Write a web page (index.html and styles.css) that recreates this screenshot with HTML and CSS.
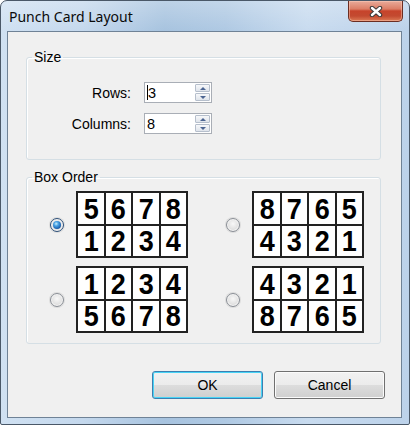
FILE: index.html
```html
<!DOCTYPE html>
<html>
<head>
<meta charset="utf-8">
<link rel="stylesheet" href="styles.css">
</head>
<body>
<div class="window">
  <div class="titlebar">
    <span class="title">Punch Card Layout</span>
    <div class="close">
      <svg width="14" height="11" viewBox="0 0 14 11">
        <path d="M3 2 L11 9 M11 2 L3 9" stroke="#3a3a3a" stroke-width="4.4" stroke-linecap="round" fill="none"/>
        <path d="M3 2 L11 9 M11 2 L3 9" stroke="#ffffff" stroke-width="2.4" stroke-linecap="round" fill="none"/>
      </svg>
    </div>
  </div>
  <div class="client">
    <fieldset class="group">
      <legend>Size</legend>
      <div class="size-body">
        <span class="lbl">Rows:</span>
        <div class="spin">
          <span class="val"><span class="caret"></span>3</span>
          <div class="spin-btns"><span class="sb up"></span><span class="sb down"></span></div>
        </div>
        <span class="lbl">Columns:</span>
        <div class="spin">
          <span class="val">8</span>
          <div class="spin-btns"><span class="sb up"></span><span class="sb down"></span></div>
        </div>
      </div>
    </fieldset>
    <fieldset class="group group-order">
      <legend>Box Order</legend>
      <div class="order-body">
        <div class="option">
          <span class="radio checked"></span>
          <div class="card"><span><b>5</b></span><span><b>6</b></span><span><b>7</b></span><span><b>8</b></span><span><b>1</b></span><span><b>2</b></span><span><b>3</b></span><span><b>4</b></span></div>
        </div>
        <div class="option">
          <span class="radio"></span>
          <div class="card"><span><b>8</b></span><span><b>7</b></span><span><b>6</b></span><span><b>5</b></span><span><b>4</b></span><span><b>3</b></span><span><b>2</b></span><span><b>1</b></span></div>
        </div>
        <div class="option">
          <span class="radio"></span>
          <div class="card"><span><b>1</b></span><span><b>2</b></span><span><b>3</b></span><span><b>4</b></span><span><b>5</b></span><span><b>6</b></span><span><b>7</b></span><span><b>8</b></span></div>
        </div>
        <div class="option">
          <span class="radio"></span>
          <div class="card"><span><b>4</b></span><span><b>3</b></span><span><b>2</b></span><span><b>1</b></span><span><b>8</b></span><span><b>7</b></span><span><b>6</b></span><span><b>5</b></span></div>
        </div>
      </div>
    </fieldset>
    <div class="buttons">
      <button class="btn default">OK</button>
      <button class="btn">Cancel</button>
    </div>
  </div>
</div>
</body>
</html>
```
FILE: styles.css
```css
html, body {
  margin: 0;
  padding: 0;
  background: #ffffff;
}

.window {
  box-sizing: border-box;
  width: 410px;
  height: 425px;
  border: 1px solid #4a5868;
  border-radius: 7px 7px 2px 2px;
  padding: 0 7px 6px 6px;
  background:
    linear-gradient(to bottom, rgba(255,255,255,0.25) 0px, rgba(255,255,255,0) 30px),
    linear-gradient(to right, #d0e1f2 0%, #c4d8ed 20%, #a7c3df 40%, #afc9e3 55%, #c8dbef 75%, #bcd2ea 100%);
  font-family: "Liberation Sans", Arial, sans-serif;
}

.titlebar {
  height: 30px;
  display: flex;
  justify-content: space-between;
  align-items: flex-start;
}

.title {
  font-family: "Noto Sans", "Open Sans", sans-serif;
  font-size: 14px;
  line-height: 18px;
  padding-top: 7px;
  padding-left: 2px;
  color: #0a0a0a;
}

.close {
  width: 55px;
  height: 21px;
  box-sizing: border-box;
  margin-right: -1px;
  border: 1px solid #6b2d22;
  border-top: none;
  border-radius: 0 0 5px 5px;
  background: linear-gradient(to bottom, #e9ab9a 0%, #dc7e66 40%, #c6432b 50%, #c34a30 75%, #dc7a55 100%);
  box-shadow: inset 0 0 0 1px rgba(255,210,190,0.45);
  display: flex;
  align-items: center;
  justify-content: center;
}

.client {
  box-sizing: border-box;
  height: 387px;
  border: 1px solid #6f8296;
  background: #f0f0f0;
  padding: 17px 0 0 18px;
  font-size: 14px;
  color: #000;
}

.group {
  margin: 0;
  padding: 0;
  width: 355px;
  box-sizing: border-box;
  border: 1px solid #d5dfe5;
  border-radius: 3px;
  box-shadow: inset 1px 1px 0 #ffffff;
  min-inline-size: 0;
}

.group legend {
  margin-left: 5px;
  padding: 0 2px;
  font-size: 14px;
  line-height: 16px;
}

.group-order {
  margin-top: 9px;
}

.size-body {
  display: grid;
  grid-template-columns: 104px 68px;
  column-gap: 13px;
  row-gap: 10px;
  align-items: center;
  padding: 17px 0 25px 0;
}

.lbl {
  justify-self: end;
  line-height: 16px;
}

.spin {
  box-sizing: border-box;
  height: 21px;
  border: 1px solid #a9aeb6;
  background: #ffffff;
  display: flex;
  align-items: center;
  justify-content: space-between;
  padding: 0 1px 0 2px;
}

.val {
  display: flex;
  align-items: center;
  line-height: 16px;
  font-size: 14.5px;
}

.caret {
  width: 1px;
  height: 15px;
  background: #000;
}

.spin-btns {
  display: flex;
  flex-direction: column;
  gap: 1px;
}

.sb {
  box-sizing: border-box;
  width: 15px;
  height: 8px;
  border: 1px solid #b6bfcc;
  border-radius: 1px;
  background: linear-gradient(to bottom, #f7f8fa, #dfe4eb);
  display: flex;
  align-items: center;
  justify-content: center;
}

.sb::after {
  content: "";
  width: 0;
  height: 0;
  border-left: 3px solid transparent;
  border-right: 3px solid transparent;
}

.sb.up::after {
  border-bottom: 3px solid #4c6592;
}

.sb.down::after {
  border-top: 3px solid #4c6592;
}

.order-body {
  display: grid;
  grid-template-columns: auto auto;
  justify-content: start;
  column-gap: 38px;
  row-gap: 8px;
  padding: 6px 0 10px 23px;
}

.option {
  display: flex;
  align-items: center;
  gap: 12px;
}

.radio {
  box-sizing: border-box;
  width: 14px;
  height: 14px;
  border-radius: 50%;
  border: 1px solid #8a8f96;
  background: radial-gradient(circle at 50% 40%, #f8f8f8 0%, #e2e2e2 55%, #c6c6c6 100%);
  box-shadow: inset 0 0 0 1px #f4f4f4, 0 0 0 1px rgba(200,200,200,0.5);
  position: relative;
}

.radio.checked {
  border-color: #2c4f78;
}

.radio.checked::after {
  content: "";
  position: absolute;
  left: 2px;
  top: 2px;
  width: 8px;
  height: 8px;
  border-radius: 50%;
  background: radial-gradient(circle at 40% 35%, #c8efff 0%, #4aa3e4 30%, #1a5fae 70%, #0c3670 100%);
}

.card {
  display: grid;
  grid-template-columns: 26px 25px 26px 25px;
  grid-template-rows: 31px 30px;
  gap: 2px;
  padding: 2px;
  background: #222222;
}

.card span {
  background: #ffffff;
  display: flex;
  align-items: center;
  justify-content: center;
}

.card b {
  display: inline-block;
  font-family: "Liberation Sans", Arial, sans-serif;
  font-weight: bold;
  font-size: 30px;
  line-height: 1;
  color: #000;
  transform: scaleX(0.9);
}

.buttons {
  display: flex;
  justify-content: flex-end;
  gap: 11px;
  margin-top: 27px;
  padding-right: 16px;
}

.btn {
  box-sizing: border-box;
  width: 111px;
  height: 28px;
  border: 1px solid #707070;
  border-radius: 3px;
  background: linear-gradient(to bottom, #f2f2f2 0%, #ebebeb 50%, #dddddd 50%, #cfcfcf 100%);
  box-shadow: inset 0 0 0 1px #fbfbfb;
  font-family: "Liberation Sans", Arial, sans-serif;
  font-size: 14px;
  color: #000;
  padding: 0;
}

.btn.default {
  border-color: #3c7fb1;
  box-shadow: inset 0 0 0 1px #48d4f6;
}
```
